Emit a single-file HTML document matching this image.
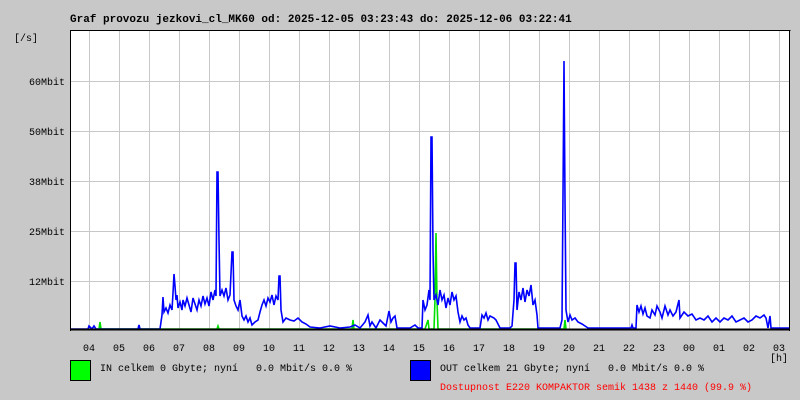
<!DOCTYPE html>
<html><head><meta charset="utf-8"><style>
body{margin:0;background:#c8c8c8;}
svg{display:block}
text{font-family:"Liberation Mono","DejaVu Sans Mono",monospace;white-space:pre;}
</style></head><body>
<svg width="800" height="400" xmlns="http://www.w3.org/2000/svg">
<rect width="800" height="400" fill="#c8c8c8"/>
<rect x="70" y="30" width="720" height="300" fill="#fff"/>
<g stroke="#c8c8c8" stroke-width="1">
<path d="M89.5 30V330M119.5 30V330M149.5 30V330M179.5 30V330M209.5 30V330M239.5 30V330M269.5 30V330M299.5 30V330M329.5 30V330M359.5 30V330M389.5 30V330M419.5 30V330M449.5 30V330M479.5 30V330M509.5 30V330M539.5 30V330M569.5 30V330M599.5 30V330M629.5 30V330M659.5 30V330M689.5 30V330M719.5 30V330M749.5 30V330M779.5 30V330"/>
<path d="M70 81.5H790M70 131.5H790M70 181.5H790M70 231.5H790M70 281.5H790"/>
</g>
<g fill="none" stroke-width="1.6">
<polyline stroke="#00e000" points="99,329 100,322 101,329 217,329 218,326 219,329 352,329 353,320 354,329 425,329 428,320 429,329 434,329 435,300 436,233 437,300 438,329 512,329 564,329 565,320 566,329"/>
<polyline stroke="#0000ff" points="70,329 88,329 89,326 92,329 94,326 96,329 138,329 139,325 140,329 160,329 161,322 162,315 163,297 164,312 166,308 168,313 170,305 172,310 173,293 174,274 175,286 176,300 177,295 178,308 180,302 182,310 183,300 185,306 187,298 189,305 191,312 193,298 195,304 197,310 199,300 201,306 203,296 205,304 207,298 209,306 211,292 213,300 215,290 216,296 217,172 218,172 219,240 220,296 222,290 224,296 226,288 228,300 230,295 232,252 233,252 234,300 236,306 238,310 240,300 242,316 244,320 246,316 248,322 250,318 252,325 255,322 258,320 260,312 262,305 264,300 266,306 268,298 270,302 272,295 274,305 276,296 278,300 279,276 280,276 281,310 283,322 286,318 290,320 294,321 298,318 302,322 306,324 310,327 320,328 330,326 340,328 350,327 355,325 360,328 365,322 368,315 370,326 372,322 376,328 380,320 383,323 386,326 389,311 391,322 393,318 395,316 397,328 410,328 415,325 418,328 422,328 423,300 425,310 427,305 429,290 430,300 431,137 432,137 433,250 434,300 436,295 438,305 440,290 442,300 444,295 446,308 448,298 450,305 452,292 454,300 456,296 458,312 460,322 462,316 464,320 466,318 468,325 470,328 480,328 482,315 484,318 486,313 488,320 490,316 494,318 496,320 500,328 508,328 510,328 512,326 514,300 515,263 516,263 517,310 519,292 521,300 523,288 525,302 527,290 529,296 531,285 533,305 535,300 537,315 538,328 560,328 562,320 563,195 564,61 565,200 566,310 568,322 570,315 572,320 575,318 578,322 582,324 588,328 631,328 632,325 633,328 636,328 637,305 639,312 641,306 643,314 645,308 647,316 650,318 652,310 655,315 657,306 660,312 662,318 665,306 668,315 670,310 673,316 676,312 679,300 680,318 684,312 688,316 692,314 696,320 700,318 704,320 708,316 712,322 716,318 720,322 724,318 728,320 732,316 736,322 740,320 744,318 748,322 752,320 756,316 760,318 764,315 766,318 768,328 770,316 771,328 790,328"/>
</g>
<path d="M70.5 30V331M70 30.5H790.5M789.5 30V331" stroke="#000" fill="none"/>
<path d="M70 329.5H790" stroke="#000" stroke-width="2"/>
<text x="70" y="22" font-size="11" font-weight="bold" fill="#000">Graf provozu jezkovi_cl_MK60 od: 2025-12-05 03:23:43 do: 2025-12-06 03:22:41</text>
<g font-size="10" fill="#000" text-anchor="end">
<text x="38" y="41">[/s]</text>
<text x="65" y="85">60Mbit</text>
<text x="65" y="135">50Mbit</text>
<text x="65" y="185">38Mbit</text>
<text x="65" y="235">25Mbit</text>
<text x="65" y="285">12Mbit</text>
</g>
<g font-size="10" fill="#000" text-anchor="middle">
<text x="89" y="351">04</text><text x="119" y="351">05</text><text x="149" y="351">06</text><text x="179" y="351">07</text><text x="209" y="351">08</text><text x="239" y="351">09</text><text x="269" y="351">10</text><text x="299" y="351">11</text><text x="329" y="351">12</text><text x="359" y="351">13</text><text x="389" y="351">14</text><text x="419" y="351">15</text><text x="449" y="351">16</text><text x="479" y="351">17</text><text x="509" y="351">18</text><text x="539" y="351">19</text><text x="569" y="351">20</text><text x="599" y="351">21</text><text x="629" y="351">22</text><text x="659" y="351">23</text><text x="689" y="351">00</text><text x="719" y="351">01</text><text x="749" y="351">02</text><text x="779" y="351">03</text>
<text x="779" y="361">[h]</text>
</g>
<rect x="70.5" y="360.5" width="20" height="20" fill="#00ff00" stroke="#000"/>
<rect x="410.5" y="360.5" width="20" height="20" fill="#0000ff" stroke="#000"/>
<g font-size="10" fill="#000">
<text x="100" y="371">IN celkem 0 Gbyte; nyní   0.0 Mbit/s 0.0 %</text>
<text x="440" y="371">OUT celkem 21 Gbyte; nyní   0.0 Mbit/s 0.0 %</text>
</g>
<text x="440" y="390" font-size="10" fill="#ff0000">Dostupnost E220 KOMPAKTOR semik 1438 z 1440 (99.9 %)</text>
</svg>
</body></html>
